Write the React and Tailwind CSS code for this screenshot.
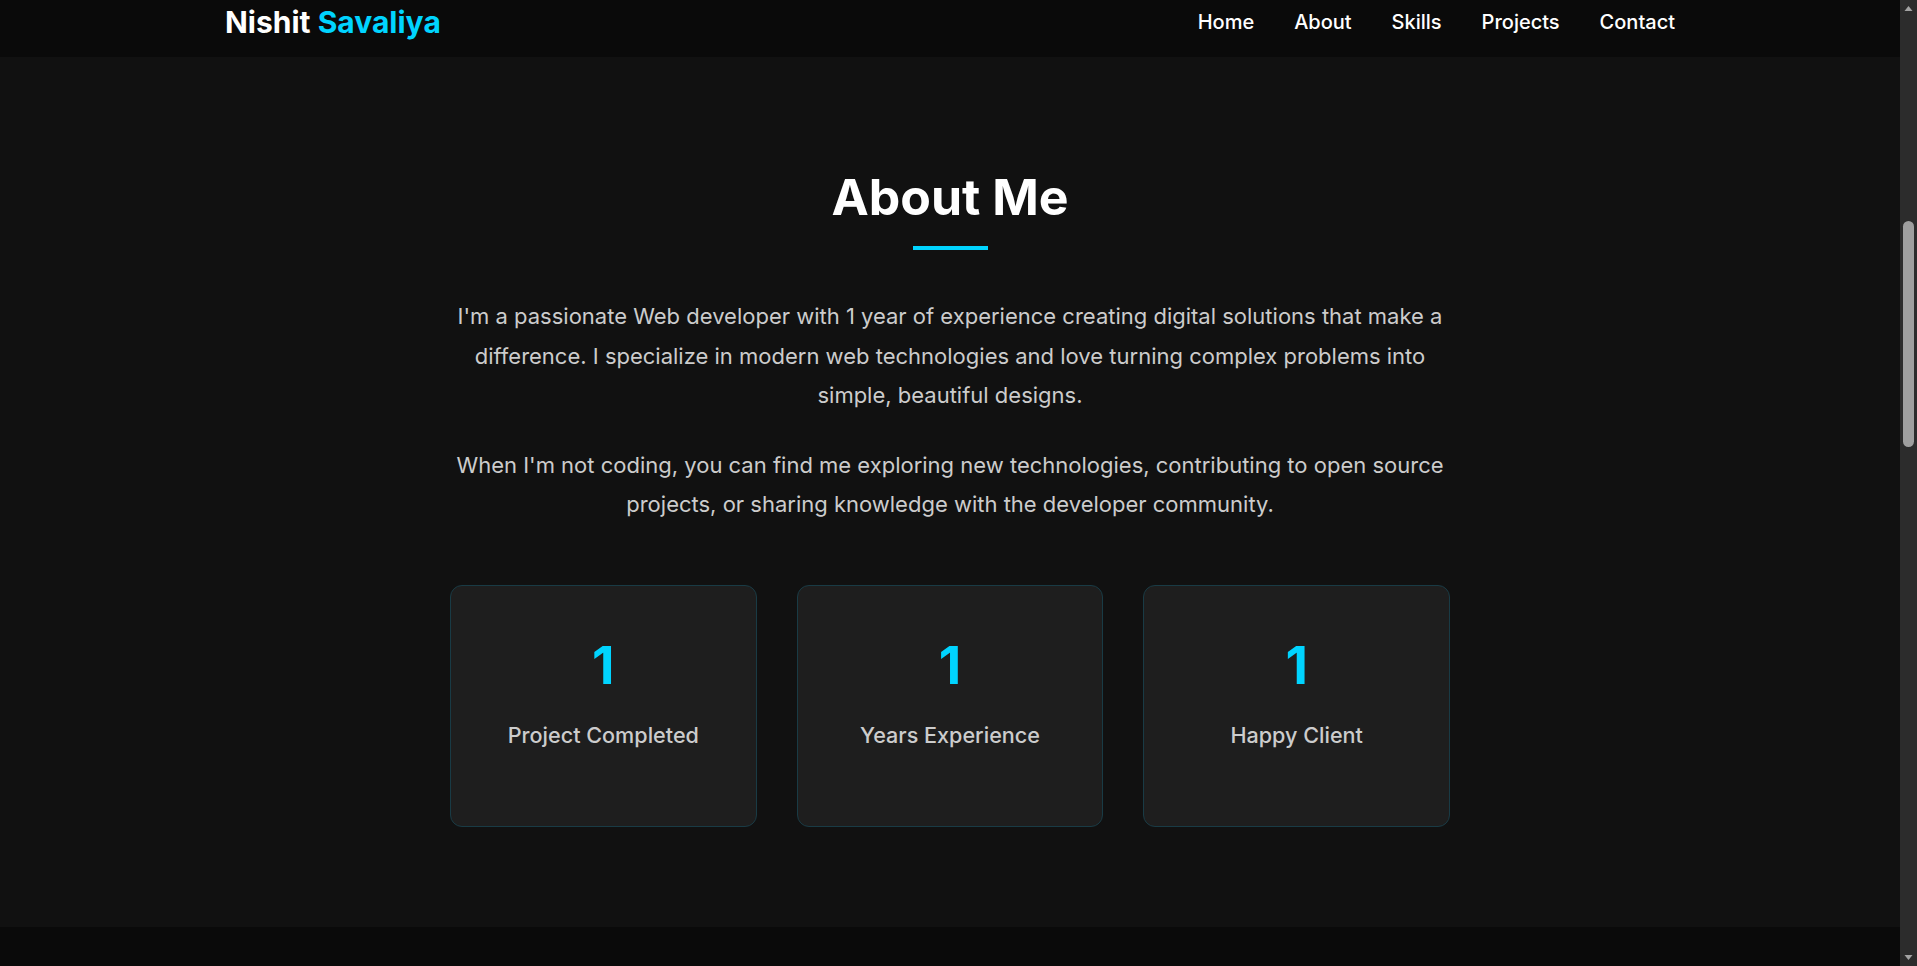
import React from "react";

const navLinks = ["Home", "About", "Skills", "Projects", "Contact"];

const stats = [
  { value: "1", label: "Project Completed" },
  { value: "1", label: "Years Experience" },
  { value: "1", label: "Happy Client" },
];

// classic dark browser scrollbar on the right edge
const ScrollBar = () => (
  <div className="flex w-[17px] shrink-0 flex-col items-center bg-[#2c2c2c]">
    <svg width="9" height="17" viewBox="0 0 9 17" className="shrink-0">
      <path d="M0.5 11 L4.5 6 L8.5 11 Z" fill="#a3a3a3" />
    </svg>
    <div className="mt-[204px] h-[226px] w-[11px] rounded-full bg-[#9f9f9f]" />
    <div className="flex-1" />
    <svg width="9" height="17" viewBox="0 0 9 17" className="shrink-0">
      <path d="M0.5 6 L4.5 11 L8.5 6 Z" fill="#a3a3a3" />
    </svg>
  </div>
);

const App = () => {
  return (
    <div className="flex h-screen overflow-hidden bg-[#111111] font-['Inter','Noto_Sans',sans-serif]">
      <main className="flex min-w-0 flex-1 flex-col">
        <header className="h-[57px] shrink-0 bg-[#0a0a0a]">
          <nav className="mx-auto flex h-[44px] w-[1450px] items-center justify-between">
            <a href="#home" className="text-[30px] font-bold leading-none text-white">
              Nishit <span className="text-[#00d4ff]">Savaliya</span>
            </a>
            <ul className="flex gap-[40px] text-[20px] font-medium text-white">
              {navLinks.map((link) => (
                <li key={link}>
                  <a href={`#${link.toLowerCase()}`} className="hover:text-[#00d4ff]">
                    {link}
                  </a>
                </li>
              ))}
            </ul>
          </nav>
        </header>

        <section id="about" className="h-[870px] shrink-0 bg-[#111111] pt-[110px]">
          <div className="mx-auto w-[1000px] text-center">
            <h2 className="text-[50px] font-bold leading-[1.2] text-white">About Me</h2>
            <div className="mx-auto mt-[19px] h-[4px] w-[75px] bg-[#00d4ff]" />

            <div className="mt-[47px] text-[22px] leading-[1.8] text-[#cccccc]">
              <p className="mb-[30px]">
                I'm a passionate Web developer with 1 year of experience creating digital
                solutions that make a difference. I specialize in modern web technologies and
                love turning complex problems into simple, beautiful designs.
              </p>
              <p>
                When I'm not coding, you can find me exploring new technologies, contributing
                to open source projects, or sharing knowledge with the developer community.
              </p>
            </div>

            <div className="mt-[60px] grid grid-cols-3 gap-[40px]">
              {stats.map((stat) => (
                <div
                  key={stat.label}
                  className="flex h-[242px] flex-col items-center rounded-xl border border-[#193b45] bg-[#1e1e1e] pt-[50px]"
                >
                  <span className="text-[52px] font-bold leading-[60px] text-[#00d4ff]">
                    {stat.value}
                  </span>
                  <span className="mt-[23px] text-[21.6px] font-medium leading-[1.5] text-[#cccccc]">
                    {stat.label}
                  </span>
                </div>
              ))}
            </div>
          </div>
        </section>

        <section id="skills" className="flex-1 bg-[#0a0a0a]" />
      </main>
      <ScrollBar />
    </div>
  );
};

export default App;
